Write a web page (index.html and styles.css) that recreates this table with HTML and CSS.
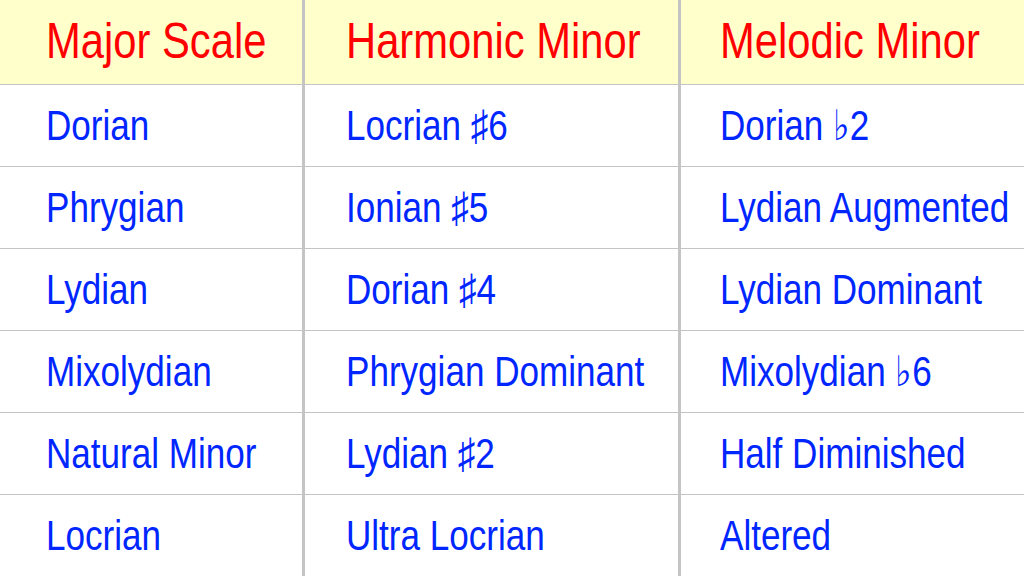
FILE: index.html
```html
<!DOCTYPE html>
<html>
<head>
<meta charset="utf-8">
<link rel="stylesheet" href="styles.css">
</head>
<body>
<div class="modes">
  <div class="cell head c1"><span class="t">Major Scale</span></div>
  <div class="cell head c2"><span class="t">Harmonic Minor</span></div>
  <div class="cell head c3"><span class="t">Melodic Minor</span></div>

  <div class="cell c1"><span class="t">Dorian</span></div>
  <div class="cell c2"><span class="t">Locrian <span class="acc">♯</span>6</span></div>
  <div class="cell c3"><span class="t">Dorian <span class="acc">♭</span>2</span></div>

  <div class="cell c1"><span class="t">Phrygian</span></div>
  <div class="cell c2"><span class="t">Ionian <span class="acc">♯</span>5</span></div>
  <div class="cell c3"><span class="t">Lydian Augmented</span></div>

  <div class="cell c1"><span class="t">Lydian</span></div>
  <div class="cell c2"><span class="t">Dorian <span class="acc">♯</span>4</span></div>
  <div class="cell c3"><span class="t">Lydian Dominant</span></div>

  <div class="cell c1"><span class="t">Mixolydian</span></div>
  <div class="cell c2"><span class="t">Phrygian Dominant</span></div>
  <div class="cell c3"><span class="t">Mixolydian <span class="acc">♭</span>6</span></div>

  <div class="cell c1"><span class="t">Natural Minor</span></div>
  <div class="cell c2"><span class="t">Lydian <span class="acc">♯</span>2</span></div>
  <div class="cell c3"><span class="t">Half Diminished</span></div>

  <div class="cell c1 last"><span class="t">Locrian</span></div>
  <div class="cell c2 last"><span class="t">Ultra Locrian</span></div>
  <div class="cell c3 last"><span class="t">Altered</span></div>
</div>
</body>
</html>
```
FILE: styles.css
```css
html, body {
  margin: 0;
  padding: 0;
  background: #ffffff;
  overflow: hidden;
  width: 1024px;
  height: 576px;
}
.modes {
  display: grid;
  grid-template-columns: 305px 376px 343px;
  grid-template-rows: 85px repeat(6, 82px);
  font-family: "Liberation Sans", Arial, sans-serif;
}
.cell {
  box-sizing: border-box;
  display: flex;
  align-items: center;
  overflow: hidden;
  white-space: nowrap;
  border-bottom: 1px solid #c4c4c4;
  color: #0026ff;
  font-size: 42px;
}
.cell.last { border-bottom: none; }
.head {
  background: #ffffcc;
  color: #ff0000;
  font-size: 50px;
  padding-bottom: 3px;
}
.c1 { padding-left: 46px; border-right: 3px solid #c4c4c4; }
.c2 { padding-left: 41px; border-right: 3px solid #c4c4c4; }
.c3 { padding-left: 39px; }
.t {
  display: inline-block;
  transform: scaleX(0.835);
  transform-origin: left center;
}
.acc {
  font-size: 1em;
}
```
